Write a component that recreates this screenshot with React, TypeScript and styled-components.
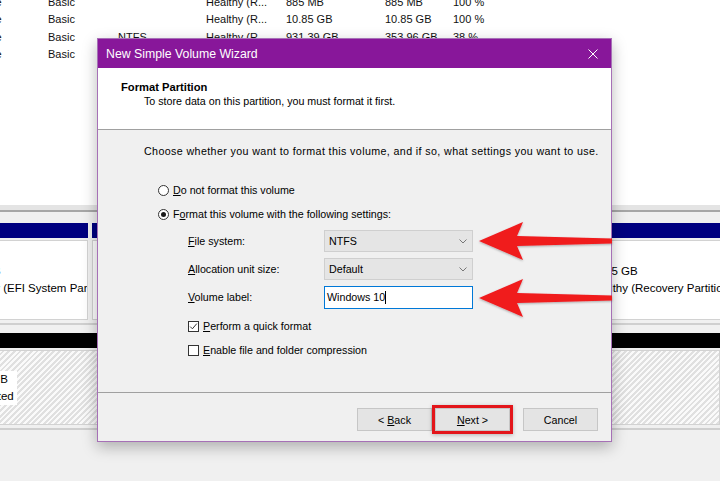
import React from 'react'
import styled, {createGlobalStyle} from 'styled-components'

const uiFont = `"Liberation Sans", Arial, sans-serif`

const GlobalStyle = createGlobalStyle`
  html, body {
    margin: 0;
    padding: 0;
    background: #f0f0f0;
    font-family: ${uiFont};
  }
`

const Screen = styled.div`
  position: relative;
  width: 720px;
  height: 481px;
  overflow: hidden;
  background: #f0f0f0;
  font-family: ${uiFont};
  color: #000;
`

// ---- Disk Management behind the wizard ----

const VolumeList = styled.div`
  height: 205px;
  background: #fff;
  overflow: hidden;
`

const VolumeRows = styled.div`
  margin: -7px 0 0 -32px;
`

const VolumeRow = styled.div`
  display: grid;
  grid-template-columns: 80px 70px 88px 80px 99px 68px 80px;
  height: 17.5px;
  align-items: center;
  font-size: 11px;
  white-space: nowrap;
  color: #111;
`

const Splitter = styled.div`
  height: 18px;
  box-sizing: border-box;
  padding-top: 5px;
  background: linear-gradient(#e4e4e4 0 5px, #f0f0f0 5px);
`

const SplitLine = styled.div`
  height: 2px;
  background: #a6a6a6;
`

const DiskArea = styled.div`
  display: flex;
  flex-direction: column;
  gap: 8px;
`

const Disk = styled.div<{$h: number}>`
  display: flex;
  gap: 4px;
  margin-left: -47px;
  height: ${p => p.$h}px;
  padding-bottom: 3px;
  border-bottom: 2px solid #cfcfcf;
`

const Partition = styled.div<{$w?: number}>`
  display: flex;
  flex-direction: column;
  ${p => (p.$w ? `width: ${p.$w}px; flex: none;` : 'flex: 1;')}
`

const PartitionBar = styled.div<{$color: string}>`
  height: 15px;
  flex: none;
  background: ${p => p.$color};
`

const PartitionBody = styled.div<{$free?: boolean}>`
  flex: 1;
  margin-top: 2px;
  padding: ${p => (p.$free ? '20px 4px 0 0' : '5px 6px 0 7px')};
  border: 1px solid #d2d2d2;
  background: ${p =>
    p.$free
      ? 'repeating-linear-gradient(135deg, #fafafa 0 2px, #e0e0e0 2px 4px)'
      : '#fff'};
  font-size: 11.5px;
  line-height: 17px;
  white-space: nowrap;
  overflow: hidden;
`

const FreeLabel = styled.div`
  display: inline-block;
  margin-left: -1px;
  background: #fff;
  padding-right: 3px;
`

// ---- wizard dialog ----

const Dialog = styled.section`
  position: absolute;
  left: 97px;
  top: 38px;
  width: 515px;
  height: 404px;
  box-sizing: border-box;
  border: 1px solid #a670b6;
  background: #f0f0f0;
  box-shadow: 0 5px 14px rgba(0, 0, 0, 0.28);
  display: flex;
  flex-direction: column;
  font-size: 10.7px;
  color: #000;
`

const TitleBar = styled.header`
  height: 29px;
  flex: none;
  background: #88179a;
  color: #fff;
  display: flex;
  align-items: center;
  justify-content: space-between;
  padding: 0 13px 0 8px;
  font-size: 12.3px;
`

const Header = styled.div`
  height: 62px;
  flex: none;
  box-sizing: border-box;
  background: #fff;
  border-bottom: 1px solid #a0a0a0;
  padding: 12px 0 0 23px;
  line-height: 14px;
`

const HeaderTitle = styled.div`
  font-weight: bold;
  font-size: 11.2px;
`

const HeaderSub = styled.div`
  margin-left: 23px;
`

const Body = styled.div`
  flex: 1;
  display: flex;
  flex-direction: column;
  padding: 13px 0 0 46px;
  line-height: 16px;
`

const Intro = styled.div`
  letter-spacing: 0.38px;
  white-space: nowrap;
`

const OptionRow = styled.label<{$top: number; $indent: number}>`
  display: flex;
  align-items: center;
  gap: 4px;
  height: 16px;
  margin: ${p => p.$top}px 0 0 ${p => p.$indent}px;
`

const RadioMark = styled.span<{$on?: boolean}>`
  width: 11px;
  height: 11px;
  box-sizing: border-box;
  border-radius: 50%;
  border: 1px solid #333;
  background: #fff;
  display: grid;
  place-items: center;
  &::after {
    content: '';
    width: 5px;
    height: 5px;
    border-radius: 50%;
    background: ${p => (p.$on ? '#1a1a1a' : 'transparent')};
  }
`

const CheckMark = styled.span`
  width: 11px;
  height: 11px;
  box-sizing: border-box;
  border: 1px solid #333;
  background: #fff;
  display: grid;
  place-items: center;
`

const Settings = styled.div`
  display: grid;
  grid-template-columns: 136px 149px;
  grid-auto-rows: 22px;
  row-gap: 6px;
  align-items: center;
  margin: 8px 0 0 44px;
`

const Select = styled.div`
  height: 22px;
  box-sizing: border-box;
  border: 1px solid #cfcfcf;
  background: #e5e5e5;
  display: flex;
  align-items: center;
  justify-content: space-between;
  padding: 0 5px 0 4px;
`

const TextBox = styled.div`
  height: 23px;
  box-sizing: border-box;
  border: 1px solid #0078d7;
  background: #fff;
  display: flex;
  align-items: center;
  padding-left: 2px;
`

const Caret = styled.span`
  width: 1px;
  height: 13px;
  background: #000;
`

const Footer = styled.footer`
  height: 49px;
  flex: none;
  box-sizing: border-box;
  border-top: 1px solid #a0a0a0;
  display: flex;
  justify-content: flex-end;
  align-items: flex-start;
  padding: 15px 13px 0 0;
`

const Button = styled.button<{$gap?: number; $highlight?: boolean}>`
  width: 75px;
  height: 23px;
  box-sizing: border-box;
  margin-left: ${p => p.$gap || 0}px;
  border: 1px solid #c6c6c6;
  background: #e4e4e4;
  font-family: ${uiFont};
  font-size: 10.7px;
  color: #000;
  padding: 0;
  ${p =>
    p.$highlight &&
    'box-shadow: 0 0 0 3px #e3161b, 0 1px 4px 3px rgba(0, 0, 0, 0.25);'}
`

const Annotations = styled.svg`
  position: absolute;
  left: 0;
  top: 0;
  width: 720px;
  height: 481px;
  pointer-events: none;
`

const volumes = [
  ['Simple', 'Basic', '', 'Healthy (R...', '885 MB', '885 MB', '100 %'],
  ['Simple', 'Basic', '', 'Healthy (R...', '10.85 GB', '10.85 GB', '100 %'],
  ['Simple', 'Basic', 'NTFS', 'Healthy (R...', '931.39 GB', '353.96 GB', '38 %'],
  ['Simple', 'Basic', 'NTFS', 'Healthy (B...', '118.24 GB', '64.10 GB', '54 %'],
]

const Chevron = () => (
  <svg width="8" height="5" viewBox="0 0 8 5">
    <polyline points="0.5,0.5 4,4 7.5,0.5" fill="none" stroke="#777" strokeWidth="1" />
  </svg>
)

const Tick = () => (
  <svg width="9" height="9" viewBox="0 0 9 9">
    <polyline points="1.2,4.6 3.4,6.8 7.8,1.6" fill="none" stroke="#333" strokeWidth="1" />
  </svg>
)

const arrowPath = (y: number) =>
  `M479 ${y} L523 ${y - 19} L517 ${y - 5} L612 ${y - 2.5} L612 ${y + 2.5} L517 ${y + 5} L523 ${y + 19} Z`

const App = () => {
  return (
    <Screen>
      <GlobalStyle />

      <VolumeList>
        <VolumeRows>
          {volumes.map((v, i) => (
            <VolumeRow key={i}>
              {v.map((c, j) => (
                <span key={j}>{c}</span>
              ))}
            </VolumeRow>
          ))}
        </VolumeRows>
      </VolumeList>
      <Splitter>
        <SplitLine />
      </Splitter>

      <DiskArea>
        <Disk $h={97}>
          <Partition $w={135}>
            <PartitionBar $color="#000080" />
            <PartitionBody>
              <div>&nbsp;</div>
              <div>100 MB</div>
              <div>Healthy (EFI System Partition)</div>
            </PartitionBody>
          </Partition>
          <Partition $w={485}>
            <PartitionBar $color="#000080" />
            <PartitionBody>
              <div>(C:)</div>
              <div>931.39 GB NTFS</div>
              <div>Healthy (Boot, Page File, Crash Dump, Primary Partition)</div>
            </PartitionBody>
          </Partition>
          <Partition>
            <PartitionBar $color="#000080" />
            <PartitionBody>
              <div>&nbsp;</div>
              <div>16.45 GB</div>
              <div>Healthy (Recovery Partition)</div>
            </PartitionBody>
          </Partition>
        </Disk>
        <Disk $h={92}>
          <Partition>
            <PartitionBar $color="#000" />
            <PartitionBody $free>
              <FreeLabel>
                <div>100.00 GB</div>
                <div>Unallocated</div>
              </FreeLabel>
            </PartitionBody>
          </Partition>
        </Disk>
      </DiskArea>

      <Dialog>
        <TitleBar>
          <span>New Simple Volume Wizard</span>
          <svg width="10" height="10" viewBox="0 0 10 10">
            <path d="M0.5 0.5 L9.5 9.5 M9.5 0.5 L0.5 9.5" stroke="#fff" strokeWidth="1" />
          </svg>
        </TitleBar>

        <Header>
          <HeaderTitle>Format Partition</HeaderTitle>
          <HeaderSub>To store data on this partition, you must format it first.</HeaderSub>
        </Header>

        <Body>
          <Intro>Choose whether you want to format this volume, and if so, what settings you want to use.</Intro>

          <OptionRow $top={23} $indent={14}>
            <RadioMark />
            <span><u>D</u>o not format this volume</span>
          </OptionRow>
          <OptionRow $top={8} $indent={14}>
            <RadioMark $on />
            <span>F<u>o</u>rmat this volume with the following settings:</span>
          </OptionRow>

          <Settings>
            <span><u>F</u>ile system:</span>
            <Select>
              <span>NTFS</span>
              <Chevron />
            </Select>
            <span><u>A</u>llocation unit size:</span>
            <Select>
              <span>Default</span>
              <Chevron />
            </Select>
            <span><u>V</u>olume label:</span>
            <TextBox>
              <span>Windows 10</span>
              <Caret />
            </TextBox>
          </Settings>

          <OptionRow $top={10} $indent={44}>
            <CheckMark>
              <Tick />
            </CheckMark>
            <span><u>P</u>erform a quick format</span>
          </OptionRow>
          <OptionRow $top={8} $indent={44}>
            <CheckMark />
            <span><u>E</u>nable file and folder compression</span>
          </OptionRow>
        </Body>

        <Footer>
          <Button>&lt; <u>B</u>ack</Button>
          <Button $gap={3} $highlight>
            <u>N</u>ext &gt;
          </Button>
          <Button $gap={13}>Cancel</Button>
        </Footer>
      </Dialog>

      <Annotations viewBox="0 0 720 481">
        <defs>
          <filter id="arrowShadow" x="-10%" y="-30%" width="120%" height="160%">
            <feDropShadow dx="0" dy="1" stdDeviation="1.2" floodColor="#000" floodOpacity="0.3" />
          </filter>
        </defs>
        <path d={arrowPath(241)} fill="#f01a1f" filter="url(#arrowShadow)" />
        <path d={arrowPath(298)} fill="#f01a1f" filter="url(#arrowShadow)" />
      </Annotations>
    </Screen>
  )
}

export default App
